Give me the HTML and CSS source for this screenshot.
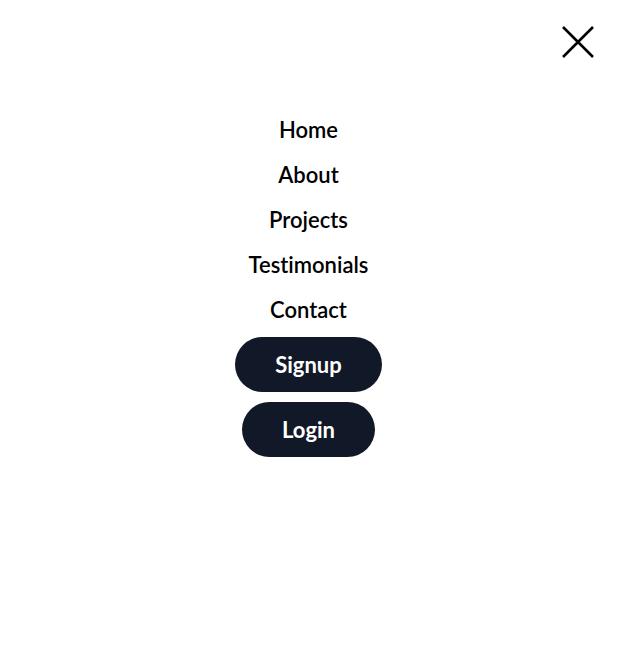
FILE: index.html
```html
<!DOCTYPE html>
<html>
<head>
<meta charset="utf-8">
<link rel="stylesheet" href="styles.css">
</head>
<body>
<div class="menu">
  <div class="topbar">
    <button class="close" aria-label="Close">
      <svg width="34" height="34" viewBox="0 0 34 34"><path d="M2 2 L32 32 M32 2 L2 32" stroke="#000" stroke-width="2.6" fill="none" stroke-linecap="butt"/></svg>
    </button>
  </div>
  <nav class="nav">
    <a class="link" href="#">Home</a>
    <a class="link" href="#">About</a>
    <a class="link" href="#">Projects</a>
    <a class="link" href="#">Testimonials</a>
    <a class="link" href="#">Contact</a>
    <a class="btn first" href="#">Signup</a>
    <a class="btn" href="#">Login</a>
  </nav>
</div>
</body>
</html>
```
FILE: styles.css
```css
html, body { margin: 0; padding: 0; background: #fff; }
body { font-family: Lato, "Noto Sans", sans-serif; color: #000; font-variant-ligatures: none; }
.menu { width: 617px; height: 646px; }
.topbar { display: flex; justify-content: flex-end; padding: 25px 22px 0 0; height: 82px; box-sizing: border-box; }
.close { background: none; border: 0; padding: 0; width: 34px; height: 34px; cursor: pointer; }
.close svg { display: block; }
.nav { display: flex; flex-direction: column; align-items: center; padding-top: 25px; }
.link { display: block; height: 45px; line-height: 45px; font-size: 22px; font-weight: 600; color: #000; text-decoration: none; }
.btn { display: block; background: #111827; color: #fff; text-decoration: none; font-size: 22px; font-weight: 700; height: 55px; line-height: 55px; padding: 0 40px; border-radius: 28px; margin-top: 10px; }
.btn.first { margin-top: 5px; }
```
